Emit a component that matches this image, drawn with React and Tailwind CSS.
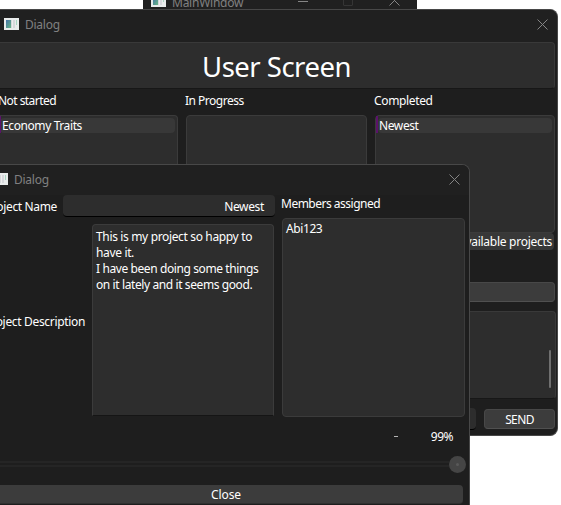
function AppIcon({ className = "" }) {
  return (
    <svg className={`h-3 w-[15px] shrink-0 ${className}`} viewBox="0 0 15 12" shapeRendering="crispEdges">
      <defs>
        <linearGradient id="pane" x1="0" y1="0" x2="1" y2="1">
          <stop offset="0" stopColor="#4673a8" />
          <stop offset="1" stopColor="#67b685" />
        </linearGradient>
      </defs>
      <rect width="15" height="12" fill="#e9ecec" />
      <rect x="2" y="2" width="5" height="8" fill="url(#pane)" />
      <rect x="7" y="2" width="4" height="8" fill="#d6d8dc" />
      <rect x="8" y="2" width="1" height="8" fill="#eeeeee" />
      <rect x="12" y="2" width="1" height="5" fill="#a9d6c2" />
    </svg>
  );
}

function CloseX({ className = "" }) {
  return (
    <svg className={`h-[11px] w-[11px] shrink-0 ${className}`} viewBox="0 0 11 11" stroke="#858585" strokeWidth="1" fill="none">
      <path d="M.5 .5l10 10M10.5 .5l-10 10" />
    </svg>
  );
}

function MainWindow() {
  return (
    <section className="absolute -top-[10px] left-[143px] flex h-5 w-[274px] items-start bg-[#202020] pl-2 pt-[5px]">
      <AppIcon />
      <span className="ml-[6px] w-[72px] text-[12px] leading-4 tracking-[-0.25px] text-[#808080]">MainWindow</span>
      <span className="ml-[54px] mt-[6px] h-px w-[10px] bg-[#858585]" />
      <span className="ml-[35px] mt-px h-[10px] w-[10px] rounded-[1px] border border-[#353535]" />
      <CloseX className="ml-9" />
    </section>
  );
}

function ListPanel({ label, item, labelClass, boxClass, itemClass = "", markClass = "-left-[2px]" }) {
  return (
    <div className="flex flex-col">
      <span className={`h-[25px] leading-[22px] ${labelClass}`}>{label}</span>
      <div className={`h-[118px] border border-[#3b3b3b] bg-[#2d2d2d] pt-[2px] ${boxClass}`}>
        {item && (
          <div className={`relative mr-[2px] h-[15px] rounded bg-[#383838] leading-[16px] ${itemClass}`}>
            <span className={`absolute -top-[2px] h-[17px] w-[2px] bg-[#5b126b] ${markClass}`} />
            {item}
          </div>
        )}
      </div>
    </div>
  );
}

function UserDialog() {
  return (
    <section className="absolute left-0 top-[9px] flex h-[427px] w-[558px] flex-col overflow-hidden rounded-r-lg border border-l-0 border-[#484848] bg-[#1e1e1e]">
      <header className="flex h-8 shrink-0 items-start bg-[#202020] pl-1 pt-2">
        <AppIcon />
        <span className="ml-[6px] flex-1 text-[12px] leading-[14px] tracking-[-0.25px] text-[#808080]">Dialog</span>
        <CloseX className="mr-[9px] mt-px" />
      </header>
      <div className="mr-[2px] flex h-[47px] shrink-0 items-center justify-center rounded-r border border-l-0 border-b-[#171717] border-[#393939] bg-[#2d2d2d] text-[27.5px] leading-8 tracking-[-0.5px]">
        <h1 className="mr-px mt-[3px]">User Screen</h1>
      </div>
      <div className="mt-[1px] grid shrink-0 grid-cols-[178px_181px_180px] gap-2">
        <ListPanel label="Not started" item="Economy Traits" labelClass="-ml-[2px] tracking-[-0.55px]" boxClass="rounded-r border-l-0" itemClass="pl-[2px] tracking-[-0.4px]" markClass="left-0 w-px" />
        <ListPanel label="In Progress" labelClass="-ml-px tracking-[-0.5px]" boxClass="rounded" />
        <ListPanel label="Completed" item="Newest" labelClass="-ml-px tracking-[-0.35px]" boxClass="rounded" itemClass="ml-[2px] pl-[1px] tracking-[-0.4px]" />
      </div>
      <button className="ml-auto mr-[3px] h-[17px] w-[180px] shrink-0 whitespace-nowrap rounded bg-[#383838] pr-[2px] text-right leading-[18px] tracking-[-0.27px]">Available projects</button>
      <div className="ml-auto mr-[2px] mt-8 h-5 w-[540px] shrink-0 rounded border border-b-[#505050] border-[#484848] bg-[#3c3c3c]" />
      <div className="mr-px mt-[9px] flex h-[88px] shrink-0 items-start justify-end rounded-r border border-b-[#171717] border-[#393939] bg-[#2d2d2d] pr-1 pt-[38px]">
        <span className="h-[38px] w-[2px] rounded bg-[#707070]" />
      </div>
      <div className="mt-[9px] flex gap-2">
        <div className="h-[22px] w-[476px] rounded border-b border-black bg-[#2d2d2d]" />
        <button className="mt-px h-5 w-[71px] rounded border border-b-[#505050] border-[#484848] bg-[#3c3c3c] leading-5 tracking-[-0.6px]">SEND</button>
      </div>
    </section>
  );
}

function ProjectDialog() {
  return (
    <section className="absolute left-0 top-[164px] flex h-[350px] w-[470px] flex-col overflow-hidden rounded-tr-lg border border-l-0 border-[#484848] bg-[#1e1e1e]">
      <header className="flex h-[30px] shrink-0 items-start bg-[#202020] pt-2">
        <AppIcon className="-ml-[7px]" />
        <span className="ml-[6px] flex-1 text-[12px] leading-[14px] tracking-[-0.25px] text-[#808080]">Dialog</span>
        <CloseX className="mr-[9px] mt-px" />
      </header>
      <div className="flex h-[223px] shrink-0">
        <div className="w-[275px]">
          <div className="flex">
            <div className="flex h-[22px] w-[57px] justify-end whitespace-nowrap leading-[24px] tracking-[-0.35px]">
              <span>Project Name</span>
            </div>
            <div className="ml-[6px] h-[22px] w-[212px] rounded border-b border-black bg-[#2d2d2d] pr-[11px] text-right leading-[24px] tracking-[-0.35px]">Newest</div>
          </div>
          <div className="mt-[7px] flex">
            <div className="flex h-[192px] w-[85px] items-center justify-end whitespace-nowrap pt-1 tracking-[-0.33px]">
              <span>Project Description</span>
            </div>
            <div className="ml-[7px] h-[192px] w-[182px] whitespace-nowrap rounded-t border border-b-[#151515] border-[#3b3b3b] bg-[#2d2d2d] pl-[3px] pt-1 leading-4 tracking-[-0.35px]">
              <p>This is my project so happy to<br />have it.</p>
              <p className="tracking-[-0.4px]">I have been doing some things<br />on it lately and it seems good.</p>
            </div>
          </div>
        </div>
        <div className="ml-[6px]">
          <div className="h-[23px] leading-[18px] tracking-[-0.5px]">Members assigned</div>
          <div className="ml-px h-[199px] w-[183px] rounded border border-[#3b3b3b] bg-[#2d2d2d] pl-[3px] pt-[2px] leading-[16px] tracking-[-0.4px]">Abi123</div>
        </div>
      </div>
      <div className="flex h-[37px] shrink-0 items-center justify-end pr-4">
        <span className="mr-[33px] h-px w-1 bg-[#b5b5b5]" />
        <span className="tracking-[-0.5px]">99%</span>
      </div>
      <div className="flex h-[18px] shrink-0 items-center">
        <div className="h-[6px] w-[449px] border-y-2 border-[#252525]" />
        <div className="flex h-[17px] w-[17px] items-center justify-center rounded-full bg-[#454545]">
          <span className="h-[3px] w-[3px] rounded-full bg-[#595959]" />
        </div>
      </div>
      <button className="mt-3 h-[19px] w-[463px] shrink-0 rounded-r border-b border-[#303030] bg-[#3c3c3c] pr-[11px] leading-[20px] tracking-[-0.1px]">Close</button>
    </section>
  );
}

export default function App() {
  return (
    <main className="relative h-[505px] w-[561px] overflow-hidden bg-white font-['Noto_Sans','Open_Sans',sans-serif] text-[12px] text-white">
      <MainWindow />
      <UserDialog />
      <ProjectDialog />
    </main>
  );
}
